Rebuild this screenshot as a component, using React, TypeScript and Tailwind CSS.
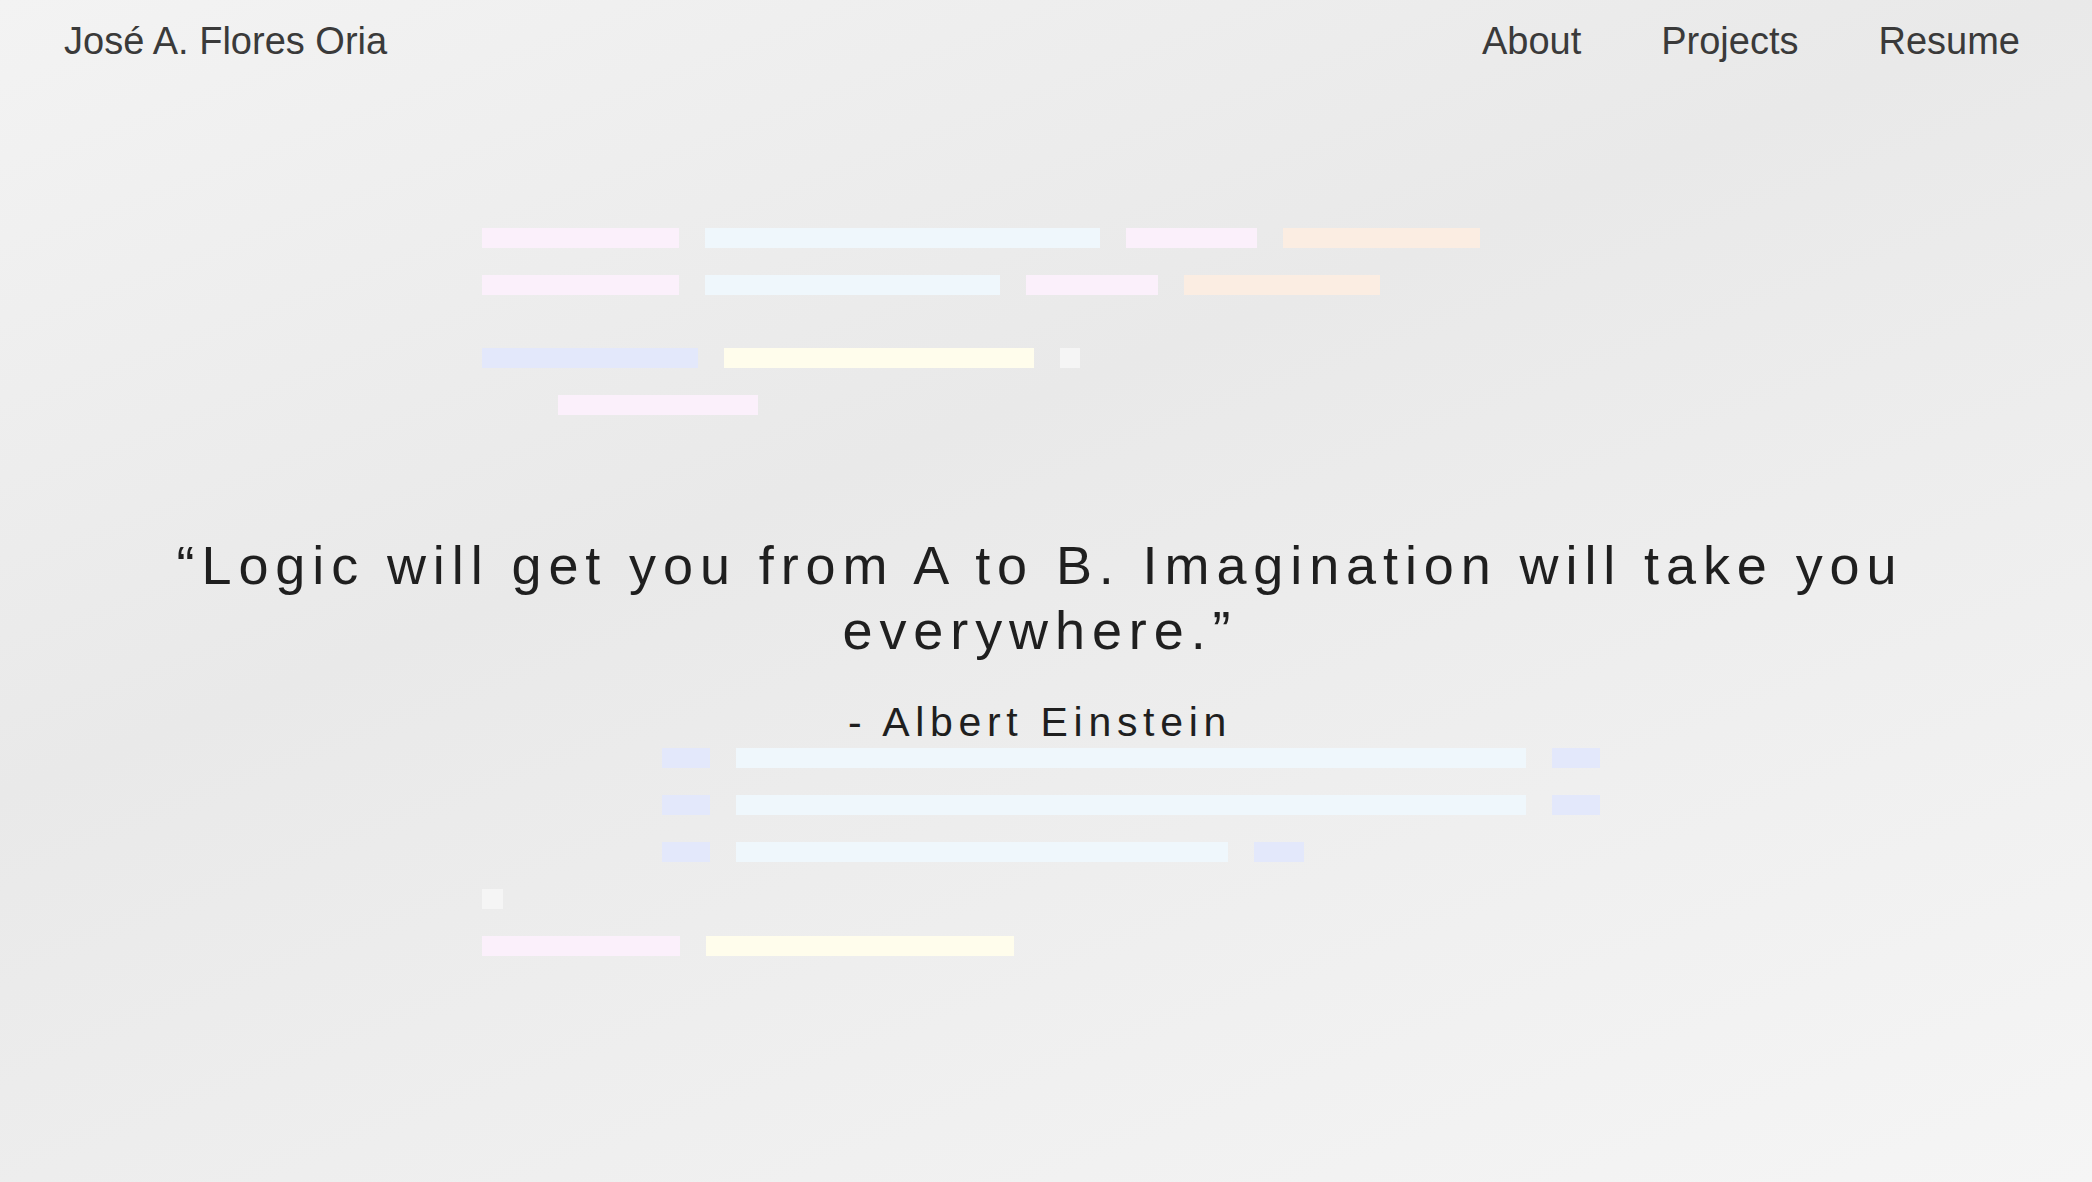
import React from "react";

type Bar = { w: string; c: string };
type Row = { cls: string; bars: Bar[] };

const PINK = "bg-[#fbf0fb]";
const BLUE = "bg-[#eff7fc]";
const PEACH = "bg-[#fbede2]";
const LAV = "bg-[#e3e8fb]";
const YEL = "bg-[#fffdec]";
const GREY = "bg-[#f5f5f5]";

const rows: Row[] = [
  {
    cls: "mt-0 pl-0",
    bars: [
      { w: "w-[197px]", c: PINK },
      { w: "w-[395px]", c: BLUE },
      { w: "w-[131px]", c: PINK },
      { w: "w-[197px]", c: PEACH },
    ],
  },
  {
    cls: "mt-[27px] pl-0",
    bars: [
      { w: "w-[197px]", c: PINK },
      { w: "w-[295px]", c: BLUE },
      { w: "w-[132px]", c: PINK },
      { w: "w-[196px]", c: PEACH },
    ],
  },
  {
    cls: "mt-[53px] pl-0",
    bars: [
      { w: "w-[216px]", c: LAV },
      { w: "w-[310px]", c: YEL },
      { w: "w-[20px]", c: GREY },
    ],
  },
  {
    cls: "mt-[27px] pl-[76px]",
    bars: [{ w: "w-[200px]", c: PINK }],
  },
  {
    cls: "mt-[333px] pl-[180px]",
    bars: [
      { w: "w-[48px]", c: LAV },
      { w: "w-[790px]", c: BLUE },
      { w: "w-[48px]", c: LAV },
    ],
  },
  {
    cls: "mt-[27px] pl-[180px]",
    bars: [
      { w: "w-[48px]", c: LAV },
      { w: "w-[790px]", c: BLUE },
      { w: "w-[48px]", c: LAV },
    ],
  },
  {
    cls: "mt-[27px] pl-[180px]",
    bars: [
      { w: "w-[48px]", c: LAV },
      { w: "w-[492px]", c: BLUE },
      { w: "w-[50px]", c: LAV },
    ],
  },
  {
    cls: "mt-[27px] pl-0",
    bars: [{ w: "w-[21px]", c: GREY }],
  },
  {
    cls: "mt-[27px] pl-0",
    bars: [
      { w: "w-[198px]", c: PINK },
      { w: "w-[308px]", c: YEL },
    ],
  },
];

export default function App() {
  return (
    <div className="h-screen w-full flex flex-col overflow-hidden bg-[linear-gradient(159deg,#f3f3f3_0%,#e9e9e9_40%,#f5f5f5_100%)] font-['Liberation_Sans',Arial,sans-serif]">
      <header className="h-[82px] shrink-0 flex items-center justify-between pl-[64px] pr-[72px] text-[38px] text-[#3a3a3a]">
        <div>José A. Flores Oria</div>
        <nav className="flex gap-[80px]">
          <a href="#">About</a>
          <a href="#">Projects</a>
          <a href="#">Resume</a>
        </nav>
      </header>
      <main className="flex-1 grid">
        <div className="col-start-1 row-start-1 self-start mt-[146px] w-[1128px] mx-auto flex flex-col">
          {rows.map((r, i) => (
            <div key={i} className={`flex gap-[26px] ${r.cls}`}>
              {r.bars.map((b, j) => (
                <div key={j} className={`h-[20px] ${b.w} ${b.c}`} />
              ))}
            </div>
          ))}
        </div>
        <div className="col-start-1 row-start-1 self-start mt-[451px] pl-[58px] pr-[70px] text-center text-[#1f1f1f]">
          <p className="text-[54px] leading-[65px] tracking-[6.9px]">
            “Logic will get you from A to B. Imagination will take you everywhere.”
          </p>
          <p className="mt-[35px] text-[41px] leading-[49px] tracking-[5.7px]">- Albert Einstein</p>
        </div>
      </main>
    </div>
  );
}
